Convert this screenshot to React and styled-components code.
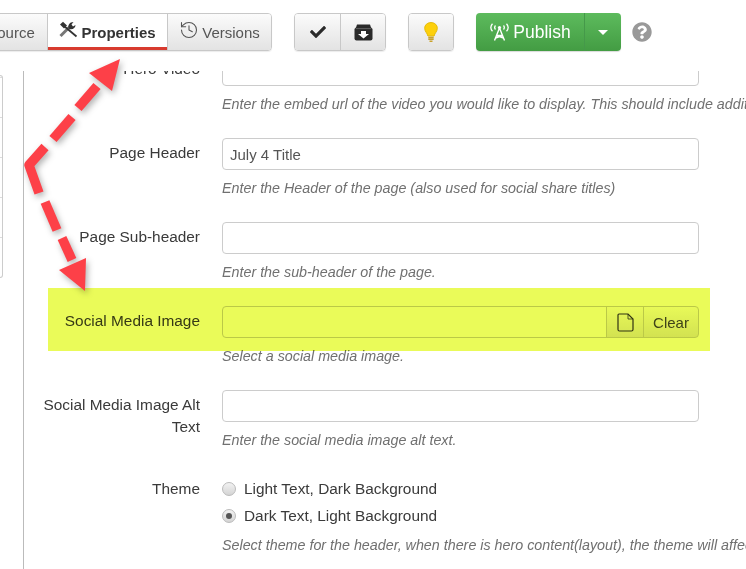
import React from "react";
import styled, { createGlobalStyle } from "styled-components";
import { FaCheck, FaQuestionCircle } from "react-icons/fa";
import { History } from "lucide-react";

const GlobalStyle = createGlobalStyle`
  html, body {
    margin: 0;
    padding: 0;
    background: white;
  }
  body {
    font-family: "Liberation Sans", Arial, sans-serif;
    color: #333;
  }
`;

const Page = styled.div`
  position: relative;
  width: 746px;
  height: 569px;
  overflow: hidden;
  background: white;
`;

const Toolbar = styled.div`
  display: flex;
  align-items: flex-start;
  height: 71px;
  box-sizing: border-box;
  padding: 13px 0 0 0;
  margin-left: -26px;
`;

const ButtonGroup = styled.div`
  display: flex;
  height: 38px;
  margin-left: ${(props) => props.$gap || 0}px;
  border: 1px solid #c8c8c8;
  border-radius: 4px;
  box-sizing: border-box;
  overflow: hidden;
  box-shadow: 0 1px 1px rgba(0, 0, 0, 0.08);
`;

const ToolButton = styled.div`
  display: flex;
  align-items: center;
  justify-content: center;
  gap: 3px;
  box-sizing: border-box;
  width: ${(props) => props.$width}px;
  font-size: 15px;
  font-weight: ${(props) => (props.$active ? "bold" : "normal")};
  color: ${(props) => (props.$active ? "#333" : "#555")};
  background: ${(props) =>
    props.$active ? "white" : "linear-gradient(#fbfbfb, #e3e3e3)"};
  border-left: ${(props) => (props.$first ? "none" : "1px solid #c8c8c8")};
  box-shadow: ${(props) => (props.$active ? "inset 0 -3px 0 #d83b2f" : "none")};
`;

const RaisedIcon = styled.span`
  display: flex;
  margin-bottom: 5px;
`;

const PublishGroup = styled.div`
  display: flex;
  height: 38px;
  margin-left: 22px;
  border-radius: 4px;
  overflow: hidden;
  color: white;
  background: linear-gradient(#5dbb5d, #439c43);
  box-shadow: 0 1px 1px rgba(0, 0, 0, 0.15);
`;

const PublishLabel = styled.div`
  display: flex;
  align-items: center;
  justify-content: center;
  gap: 3px;
  width: 108px;
  font-size: 17.5px;
`;

const PublishCaret = styled.div`
  display: flex;
  align-items: center;
  justify-content: center;
  width: 36px;
  border-left: 1px solid #45994a;
  &::after {
    content: "";
    border-left: 5px solid transparent;
    border-right: 5px solid transparent;
    border-top: 5px solid white;
  }
`;

const HelpIcon = styled.div`
  display: flex;
  align-items: center;
  height: 38px;
  margin-left: 11px;
  font-size: 20px;
  color: #999;
`;

const Body = styled.div`
  display: flex;
  height: 498px;
`;

const SideStub = styled.div`
  width: 3px;
  height: 203px;
  margin-top: 4px;
  border: 1px solid #ccc;
  border-left: none;
  border-radius: 0 4px 4px 0;
  box-sizing: border-box;
  background: linear-gradient(white 39px, #ddd 39px) 0 2px / 100% 40px;
`;

const Divider = styled.div`
  width: 1px;
  margin-left: 20px;
  background: #bbb;
`;

const Form = styled.div`
  flex: 1;
  overflow: hidden;
`;

const FormInner = styled.div`
  margin-top: -17px;
`;

const Row = styled.div`
  position: relative;
  display: grid;
  grid-template-columns: 176px 477px;
  column-gap: 22px;
  height: 84px;
  align-content: start;
  ${(props) =>
    props.$highlight &&
    `
    &::after {
      content: "";
      position: absolute;
      left: 24px;
      top: -18px;
      width: 662px;
      height: 63px;
      background: #eafb59;
      mix-blend-mode: multiply;
    }
  `}
`;

const Label = styled.label`
  padding-top: 4px;
  font-size: 15.4px;
  line-height: 22px;
  text-align: right;
  color: #3a3a3a;
`;

const Field = styled.div`
  min-width: 0;
`;

const Input = styled.input`
  display: block;
  flex: 1;
  width: 100%;
  height: 32px;
  box-sizing: border-box;
  padding: 0 7px;
  border: 1px solid #ccc;
  border-radius: 4px;
  font-family: inherit;
  font-size: 15px;
  color: #555;
  background: white;
  outline: none;
`;

const InputGroup = styled.div`
  display: flex;
  height: 32px;
  ${Input} {
    border-radius: 4px 0 0 4px;
    min-width: 0;
  }
`;

const AddonButton = styled.div`
  display: flex;
  align-items: center;
  justify-content: center;
  box-sizing: border-box;
  width: ${(props) => props.$width}px;
  margin-left: -1px;
  font-size: 15px;
  color: #444;
  border: 1px solid #ccc;
  border-radius: ${(props) => (props.$last ? "0 4px 4px 0" : "0")};
  background: linear-gradient(#fdfdfd, #e6e6e6);
`;

const Help = styled.div`
  margin-top: 9px;
  font-size: 14.3px;
  line-height: 18px;
  font-style: italic;
  color: #707070;
  white-space: nowrap;
`;

const RadioRow = styled.div`
  display: flex;
  align-items: center;
  gap: 8px;
  height: 27px;
  font-size: 15.4px;
  color: #3a3a3a;
`;

const Radio = styled.span`
  position: relative;
  box-sizing: border-box;
  width: 14px;
  height: 14px;
  border: 1px solid #bbb;
  border-radius: 50%;
  background: linear-gradient(#f2f2f2, #d4d4d4);
  ${(props) =>
    props.$checked &&
    `
    &::after {
      content: "";
      position: absolute;
      left: 3px;
      top: 3px;
      width: 6px;
      height: 6px;
      border-radius: 50%;
      background: #555;
    }
  `}
`;

const RadioList = styled.div`
  margin-top: 1px;
`;

const ThemeHelp = styled(Help)`
  margin-top: 7px;
`;

const ArrowLayer = styled.svg`
  position: absolute;
  left: 0;
  top: 0;
  width: 746px;
  height: 569px;
  pointer-events: none;
  filter: drop-shadow(2px 3px 3px rgba(0, 0, 0, 0.3));
`;

function ToolsIcon() {
  return (
    <svg width="19" height="17" viewBox="0 0 19 17" fill="none">
      <path d="M1.5 15 L11 5.5" stroke="#777" strokeWidth="3" />
      <path d="M9.5 7 C9 4 10.5 1 14.5 1 L12.5 3.5 L14 5.5 L16.5 4 C16.5 7 13.5 9 10.5 8 Z" fill="#333" />
      <path d="M5 5 L17.5 15.5" stroke="#333" strokeWidth="1.8" />
      <path d="M1 3.5 L4 0.8 L8 4.5 L5 7.5 Z" fill="#333" />
    </svg>
  );
}

function ArchiveIcon() {
  return (
    <svg width="19" height="17" viewBox="0 0 19 17">
      <path d="M3 0.5 H16 L17.5 5 H1.5 Z" fill="#2a2a2a" />
      <rect x="0.5" y="3.5" width="18" height="13" rx="2" fill="#2a2a2a" />
      <path d="M1.5 4.6 H17.5" stroke="#777" strokeWidth="0.7" />
      <path d="M7 7 H12 V10 H15 L9.5 14.5 L4 10 H7 Z" fill="white" />
    </svg>
  );
}

function BulbIcon() {
  return (
    <svg width="14" height="21" viewBox="0 0 14 21">
      <path
        d="M7 0.6 C3 0.6 0.7 3.3 0.7 6.3 C0.7 9.5 3.4 11.2 3.9 14 H10.1 C10.6 11.2 13.3 9.5 13.3 6.3 C13.3 3.3 11 0.6 7 0.6 Z"
        fill="#fdd00b"
        stroke="#e3b90a"
      />
      <path d="M4.3 15.5 H9.7 M4.3 17.3 H9.7 M5.5 19.2 H8.5" stroke="#c9a22a" strokeWidth="1.5" />
    </svg>
  );
}

function BroadcastIcon() {
  return (
    <svg width="21" height="18" viewBox="0 0 21 18" fill="none" stroke="white">
      <path d="M3.5 0.8 C1.5 3 1.5 6 3.5 8.2 M6.5 2.5 C5.5 3.7 5.5 5.3 6.5 6.5 M17.5 0.8 C19.5 3 19.5 6 17.5 8.2 M14.5 2.5 C15.5 3.7 15.5 5.3 14.5 6.5" strokeWidth="1.3" />
      <circle cx="10.5" cy="4.5" r="1.6" fill="white" stroke="none" />
      <path d="M10.5 5 L5.5 17.5 M10.5 5 L15.5 17.5 M7.5 12.5 H13.5 M6.5 15 L13.5 12.5 M14.5 15 L7.5 12.5" strokeWidth="1.4" />
    </svg>
  );
}

function DocumentIcon() {
  return (
    <svg width="17" height="19" viewBox="0 0 17 19" fill="none" stroke="#333" strokeWidth="1.2">
      <path d="M2 1 H11 L16 6 V16.5 C16 17.3 15.5 18 14.5 18 H2.5 C1.5 18 1 17.3 1 16.5 V2 C1 1.4 1.4 1 2 1 Z" />
      <path d="M11 1 V6 H16" strokeWidth="0.8" />
    </svg>
  );
}

function Arrows() {
  return (
    <ArrowLayer viewBox="0 0 746 569">
      <g stroke="#fd4048" strokeWidth="9.5" fill="none">
        <path d="M78 108 L97 86" />
        <path d="M53 139 L72 117" />
        <path d="M45 147 L29 165 L39 193" strokeLinejoin="round" />
        <path d="M45 202 L57 230" />
        <path d="M62 238 L72 260" />
      </g>
      <polygon points="120,59 89,73 112,91" fill="#fd4048" />
      <polygon points="85,291 59,270 86,258" fill="#fd4048" />
    </ArrowLayer>
  );
}

function FormRow({ label, help, highlight, children }) {
  return (
    <Row $highlight={highlight}>
      <Label>{label}</Label>
      <Field>
        {children}
        <Help>{help}</Help>
      </Field>
    </Row>
  );
}

export default function App() {
  return (
    <Page>
      <GlobalStyle />
      <Toolbar>
        <ButtonGroup>
          <ToolButton $first $width={72}>Source</ToolButton>
          <ToolButton $active $width={120}>
            <RaisedIcon>
              <ToolsIcon />
            </RaisedIcon>
            Properties
          </ToolButton>
          <ToolButton $width={104}>
            <RaisedIcon>
              <History size={20} strokeWidth={1.3} />
            </RaisedIcon>
            Versions
          </ToolButton>
        </ButtonGroup>
        <ButtonGroup $gap={22}>
          <ToolButton $first $width={45}>
            <FaCheck size={16} color="#2a2a2a" />
          </ToolButton>
          <ToolButton $width={45}>
            <ArchiveIcon />
          </ToolButton>
        </ButtonGroup>
        <ButtonGroup $gap={22}>
          <ToolButton $first $width={44}>
            <BulbIcon />
          </ToolButton>
        </ButtonGroup>
        <PublishGroup>
          <PublishLabel>
            <BroadcastIcon />
            Publish
          </PublishLabel>
          <PublishCaret />
        </PublishGroup>
        <HelpIcon>
          <FaQuestionCircle />
        </HelpIcon>
      </Toolbar>
      <Body>
        <SideStub />
        <Divider />
        <Form>
          <FormInner>
            <FormRow
              label="Hero Video"
              help="Enter the embed url of the video you would like to display. This should include additional parameters"
            >
              <Input readOnly />
            </FormRow>
            <FormRow
              label="Page Header"
              help="Enter the Header of the page (also used for social share titles)"
            >
              <Input readOnly value="July 4 Title" />
            </FormRow>
            <FormRow label="Page Sub-header" help="Enter the sub-header of the page.">
              <Input readOnly />
            </FormRow>
            <FormRow
              highlight
              label="Social Media Image"
              help="Select a social media image."
            >
              <InputGroup>
                <Input readOnly />
                <AddonButton $width={38}>
                  <DocumentIcon />
                </AddonButton>
                <AddonButton $last $width={56}>Clear</AddonButton>
              </InputGroup>
            </FormRow>
            <FormRow
              label="Social Media Image Alt Text"
              help="Enter the social media image alt text."
            >
              <Input readOnly />
            </FormRow>
            <Row>
              <Label>Theme</Label>
              <Field>
                <RadioList>
                  <RadioRow>
                    <Radio />
                    Light Text, Dark Background
                  </RadioRow>
                  <RadioRow>
                    <Radio $checked />
                    Dark Text, Light Background
                  </RadioRow>
                </RadioList>
                <ThemeHelp>
                  Select theme for the header, when there is hero content(layout), the theme will affect
                </ThemeHelp>
              </Field>
            </Row>
          </FormInner>
        </Form>
      </Body>
      <Arrows />
    </Page>
  );
}
